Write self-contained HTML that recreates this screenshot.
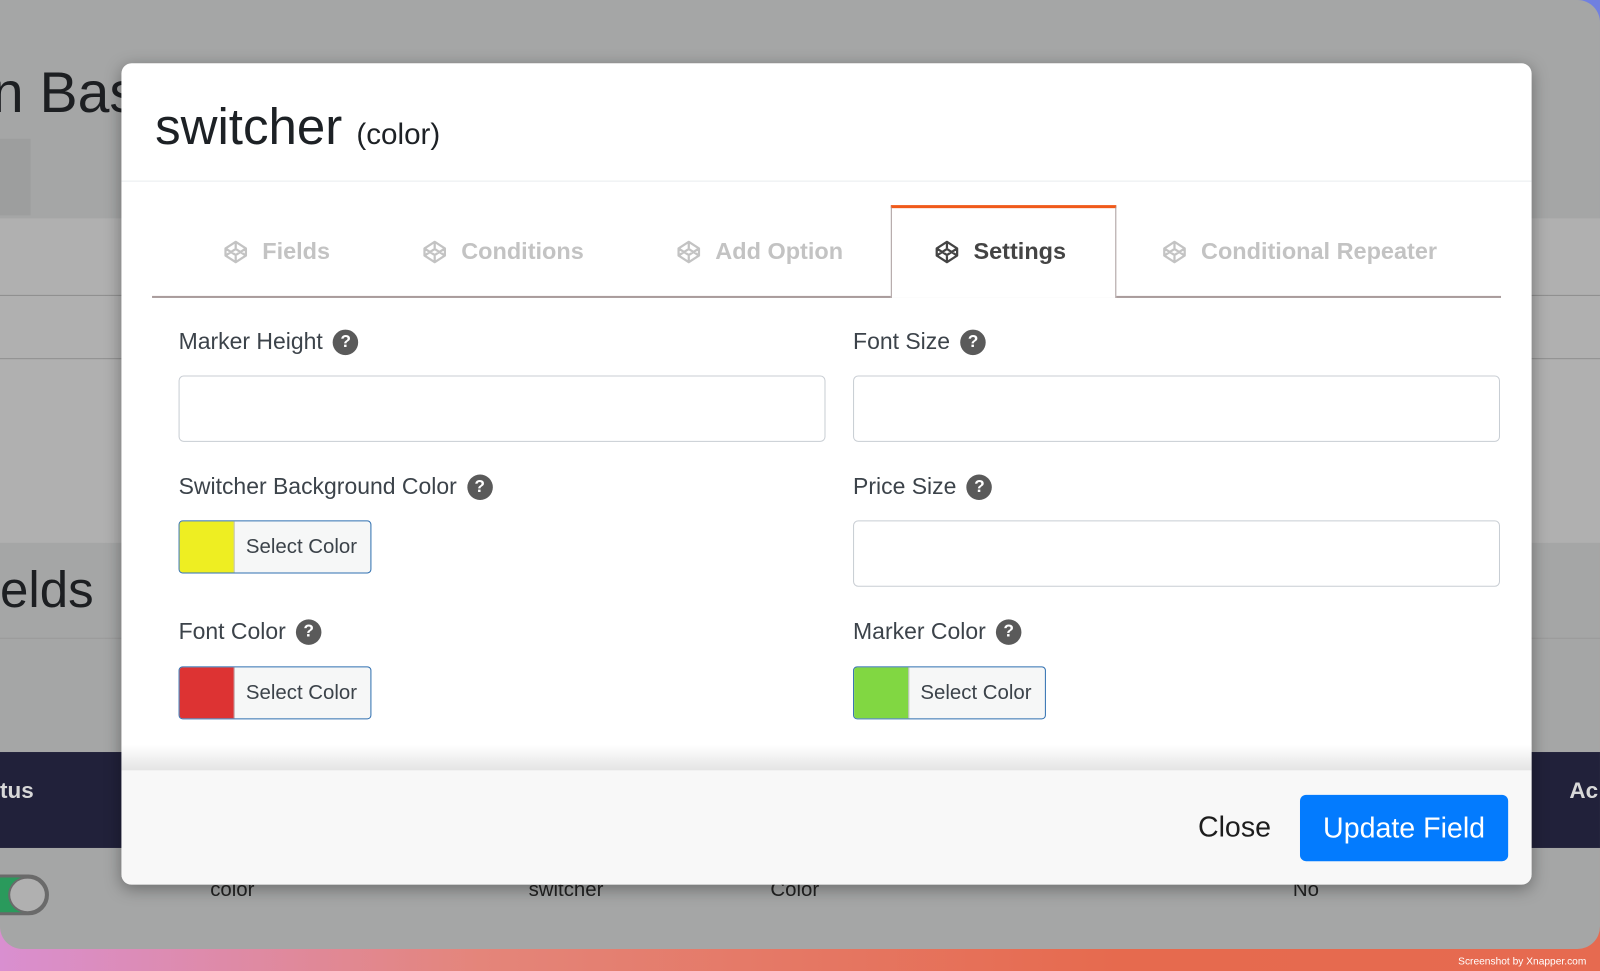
<!DOCTYPE html>
<html><head><meta charset="utf-8"><style>
*{box-sizing:border-box;margin:0;padding:0}
html,body{width:1600px;height:971px;overflow:hidden}
body{position:relative;font-family:"Liberation Sans",sans-serif;background:linear-gradient(90deg,#d98fd0 0%,#e4857a 30%,#e66a4e 70%,#e66a50 100%)}
#root{position:absolute;left:0;top:0;width:1568px;height:952px;transform:scale(1.0204);transform-origin:0 0}
.topbg{position:absolute;left:0;top:0;width:1568px;height:400px;background:linear-gradient(90deg,#5ab7f0,#7080e0)}
.win{position:absolute;left:0;top:0;width:1568px;height:930px;background:#a5a6a6;border-radius:0 22px 22px 22px;overflow:hidden}
.abs{position:absolute}
.modal{position:absolute;left:119px;top:62px;width:1382px;height:805px;background:#fff;border-radius:10px;overflow:hidden;box-shadow:0 4px 16px rgba(0,0,0,.35)}
.lbl{position:absolute;font-size:22.5px;color:#3c434a;display:flex;align-items:center;gap:10px;white-space:nowrap}
.q{width:25px;height:25px;border-radius:50%;background:#5a5a5a;color:#fff;font-weight:bold;font-size:17px;display:flex;align-items:center;justify-content:center}
.inp{position:absolute;width:634px;height:65px;border:1.5px solid #c8cdd3;border-radius:5px}
.cb{position:absolute;width:189px;height:52px;border:1.5px solid #2f6fb0;border-radius:4px;background:#f6f7f7;overflow:hidden;font-size:20px;color:#3c434a}
.cb .sw{position:absolute;left:0;top:0;width:54px;height:100%;border-right:1px solid #c3c4c7}
.cb span{position:absolute;left:65px;top:14px}
.tab{position:absolute;font-size:23px;font-weight:bold;color:#c3c3c3;display:flex;align-items:center;gap:14px;white-space:nowrap}
</style></head><body>
<div id="root">
<div class="topbg"></div>
<div class="win">
  <div class="abs" style="top:58px;font-size:56px;color:#1d1f22;left:-8px">n Basi</div>
  <div class="abs" style="left:0;top:136px;width:30px;height:75px;background:#9d9e9e"></div>
  <div class="abs" style="left:0;top:214px;width:1568px;height:318px;background:#b0b0b0"></div>
  <div class="abs" style="left:0;top:289px;width:1568px;height:1px;background:#8e8e8e"></div>
  <div class="abs" style="left:0;top:351px;width:1568px;height:1px;background:#8e8e8e"></div>
  <div class="abs" style="left:0;top:549px;font-size:50px;color:#1d1f22">elds</div>
  <div class="abs" style="left:0;top:625px;width:1568px;height:1px;background:#9a9a9a"></div>
  <div class="abs" style="left:0;top:737px;width:1568px;height:94px;background:#21213a"></div>
  <div class="abs" style="left:0;top:762px;font-size:22px;font-weight:bold;color:#d8d8d8">tus</div>
  <div class="abs" style="left:1538px;top:762px;font-size:22px;font-weight:bold;color:#d8d8d8">Ac</div>
  <div class="abs" style="left:-20px;top:857px;width:68px;height:40px;border-radius:20px;background:#2a9a5c;border:3px solid #6a6a6a"></div>
  <div class="abs" style="left:8px;top:859px;width:38px;height:36px;border-radius:50%;background:#b0b0b0;border:2px solid #6a6a6a"></div>
  <div class="abs" style="left:206px;top:861px;font-size:20px;color:#222">color</div>
  <div class="abs" style="left:518px;top:861px;font-size:20px;color:#222">switcher</div>
  <div class="abs" style="left:755px;top:861px;font-size:20px;color:#222">Color</div>
  <div class="abs" style="left:1267px;top:861px;font-size:20px;color:#222">No</div>
</div>
<div class="abs" style="left:1429px;top:937px;font-size:10px;color:#fff;white-space:nowrap">Screenshot by Xnapper.com</div>

<div class="modal">
  <div class="abs" style="left:33px;top:33px;font-size:50px;color:#1d2125;white-space:nowrap">switcher <span style="font-size:29px">(color)</span></div>
  <div class="abs" style="left:0;top:115px;width:100%;height:1px;background:#e9ecef"></div>
  <div class="abs" style="left:30px;top:228px;width:1322px;height:1.5px;background:#a99c9c"></div>
  <div class="abs" style="left:754px;top:139px;width:221px;height:91px;background:#fff;border:1.5px solid #a99c9c;border-bottom:none;border-top:3px solid #f05a1a"></div>
  <div class="tab" style="left:100px;top:171px"><svg width="24" height="24" viewBox="0 0 24 24" fill="none" stroke="currentColor" stroke-width="2.2" stroke-linejoin="round"><path d="M12 2L22 8.5V15.5L12 22L2 15.5V8.5Z M12 2V8 M12 16V22 M2 8.5L12 15L22 8.5 M2 15.5L12 9L22 15.5"/></svg>Fields</div>
  <div class="tab" style="left:295px;top:171px"><svg width="24" height="24" viewBox="0 0 24 24" fill="none" stroke="currentColor" stroke-width="2.2" stroke-linejoin="round"><path d="M12 2L22 8.5V15.5L12 22L2 15.5V8.5Z M12 2V8 M12 16V22 M2 8.5L12 15L22 8.5 M2 15.5L12 9L22 15.5"/></svg>Conditions</div>
  <div class="tab" style="left:544px;top:171px"><svg width="24" height="24" viewBox="0 0 24 24" fill="none" stroke="currentColor" stroke-width="2.2" stroke-linejoin="round"><path d="M12 2L22 8.5V15.5L12 22L2 15.5V8.5Z M12 2V8 M12 16V22 M2 8.5L12 15L22 8.5 M2 15.5L12 9L22 15.5"/></svg>Add Option</div>
  <div class="tab" style="left:797px;top:171px;color:#444"><svg width="24" height="24" viewBox="0 0 24 24" fill="none" stroke="currentColor" stroke-width="2.2" stroke-linejoin="round"><path d="M12 2L22 8.5V15.5L12 22L2 15.5V8.5Z M12 2V8 M12 16V22 M2 8.5L12 15L22 8.5 M2 15.5L12 9L22 15.5"/></svg>Settings</div>
  <div class="tab" style="left:1020px;top:171px"><svg width="24" height="24" viewBox="0 0 24 24" fill="none" stroke="currentColor" stroke-width="2.2" stroke-linejoin="round"><path d="M12 2L22 8.5V15.5L12 22L2 15.5V8.5Z M12 2V8 M12 16V22 M2 8.5L12 15L22 8.5 M2 15.5L12 9L22 15.5"/></svg>Conditional Repeater</div>

  <div class="lbl" style="left:56px;top:260px">Marker Height <span class="q">?</span></div>
  <div class="inp" style="left:56px;top:306px"></div>
  <div class="lbl" style="left:717px;top:260px">Font Size <span class="q">?</span></div>
  <div class="inp" style="left:717px;top:306px"></div>

  <div class="lbl" style="left:56px;top:402px">Switcher Background Color <span class="q">?</span></div>
  <div class="cb" style="left:56px;top:448px"><div class="sw" style="background:#eeee22"></div><span>Select Color</span></div>
  <div class="lbl" style="left:717px;top:402px">Price Size <span class="q">?</span></div>
  <div class="inp" style="left:717px;top:448px"></div>

  <div class="lbl" style="left:56px;top:544px">Font Color <span class="q">?</span></div>
  <div class="cb" style="left:56px;top:591px"><div class="sw" style="background:#dd3333"></div><span>Select Color</span></div>
  <div class="lbl" style="left:717px;top:544px">Marker Color <span class="q">?</span></div>
  <div class="cb" style="left:717px;top:591px"><div class="sw" style="background:#81d742"></div><span>Select Color</span></div>

  <div class="abs" style="left:0;top:668px;width:100%;height:25px;background:linear-gradient(#fff,#e4e4e4)"></div>
  <div class="abs" style="left:0;top:693px;width:100%;height:112px;background:#f8f8f8"></div>
  <div class="abs" style="left:1055px;top:733px;font-size:28px;color:#1d1d1d">Close</div>
  <div class="abs" style="left:1155px;top:717px;width:204px;height:65px;background:#037bfe;border-radius:6px;color:#fff;font-size:28px;display:flex;align-items:center;justify-content:center">Update Field</div>
</div>
</div>
</body></html>
